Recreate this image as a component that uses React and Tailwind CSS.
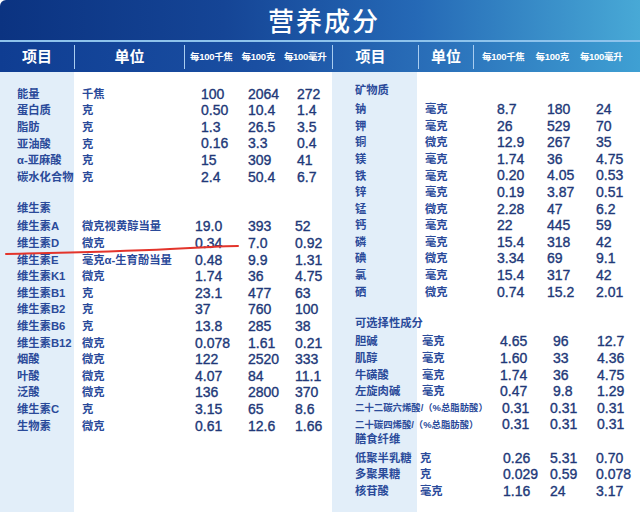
const LEFT = [
  { l: '能量', u: '千焦', v: ['100', '2064', '272'], s: 'top' },
  { l: '蛋白质', u: '克', v: ['0.50', '10.4', '1.4'], s: 'top' },
  { l: '脂肪', u: '克', v: ['1.3', '26.5', '3.5'], s: 'top' },
  { l: '亚油酸', u: '克', v: ['0.16', '3.3', '0.4'], s: 'top' },
  { l: 'α-亚麻酸', u: '克', v: ['15', '309', '41'], s: 'top' },
  { l: '碳水化合物', u: '克', v: ['2.4', '50.4', '6.7'], s: 'top' },
  { blank: true },
  { head: '维生素' },
  { l: '维生素A', u: '微克视黄醇当量', v: ['19.0', '393', '52'], s: 'vit' },
  { l: '维生素D', u: '微克', v: ['0.34', '7.0', '0.92'], s: 'vit' },
  { l: '维生素E', u: '毫克α-生育酚当量', v: ['0.48', '9.9', '1.31'], s: 'vit' },
  { l: '维生素K1', u: '微克', v: ['1.74', '36', '4.75'], s: 'vit' },
  { l: '维生素B1', u: '克', v: ['23.1', '477', '63'], s: 'vit' },
  { l: '维生素B2', u: '克', v: ['37', '760', '100'], s: 'vit' },
  { l: '维生素B6', u: '克', v: ['13.8', '285', '38'], s: 'vit' },
  { l: '维生素B12', u: '微克', v: ['0.078', '1.61', '0.21'], s: 'vit' },
  { l: '烟酸', u: '微克', v: ['122', '2520', '333'], s: 'vit' },
  { l: '叶酸', u: '微克', v: ['4.07', '84', '11.1'], s: 'vit' },
  { l: '泛酸', u: '微克', v: ['136', '2800', '370'], s: 'vit' },
  { l: '维生素C', u: '克', v: ['3.15', '65', '8.6'], s: 'vit' },
  { l: '生物素', u: '微克', v: ['0.61', '12.6', '1.66'], s: 'vit' },
]

const RIGHT = [
  { head: '矿物质' },
  { l: '钠', u: '毫克', v: ['8.7', '180', '24'], s: 'min' },
  { l: '钾', u: '毫克', v: ['26', '529', '70'], s: 'min' },
  { l: '铜', u: '微克', v: ['12.9', '267', '35'], s: 'min' },
  { l: '镁', u: '毫克', v: ['1.74', '36', '4.75'], s: 'min' },
  { l: '铁', u: '毫克', v: ['0.20', '4.05', '0.53'], s: 'min' },
  { l: '锌', u: '毫克', v: ['0.19', '3.87', '0.51'], s: 'min' },
  { l: '锰', u: '微克', v: ['2.28', '47', '6.2'], s: 'min' },
  { l: '钙', u: '毫克', v: ['22', '445', '59'], s: 'min' },
  { l: '磷', u: '毫克', v: ['15.4', '318', '42'], s: 'min' },
  { l: '碘', u: '微克', v: ['3.34', '69', '9.1'], s: 'min' },
  { l: '氯', u: '毫克', v: ['15.4', '317', '42'], s: 'min' },
  { l: '硒', u: '微克', v: ['0.74', '15.2', '2.01'], s: 'min' },
  { blank: true },
  { head: '可选择性成分' },
  { l: '胆碱', u: '毫克', v: ['4.65', '96', '12.7'], s: 'opt' },
  { l: '肌醇', u: '毫克', v: ['1.60', '33', '4.36'], s: 'opt' },
  { l: '牛磺酸', u: '毫克', v: ['1.74', '36', '4.75'], s: 'opt' },
  { l: '左旋肉碱', u: '毫克', v: ['0.47', '9.8', '1.29'], s: 'opt' },
  { wide: '二十二碳六烯酸/（%总脂肪酸）', v: ['0.31', '0.31', '0.31'], s: 'fat' },
  { wide: '二十碳四烯酸/（%总脂肪酸）', v: ['0.31', '0.31', '0.31'], s: 'fat' },
  { head: '膳食纤维' },
  { l: '低聚半乳糖', u: '克', v: ['0.26', '5.31', '0.70'], s: 'fib' },
  { l: '多聚果糖', u: '克', v: ['0.029', '0.59', '0.078'], s: 'fib' },
  { l: '核苷酸', u: '毫克', v: ['1.16', '24', '3.17'], s: 'fib' },
]

// per-section nudges: unit, num1, num2, num3
const PAD = {
  top: ['pl-[8px]', 'pl-[7px]', 'pl-[2px]', 'pl-[3px]'],
  vit: ['pl-[8px]', 'pl-[1px]', 'pl-[2px]', 'pl-[1px]'],
  min: ['pl-[8px]', 'pl-[2px]', 'pl-0', 'pl-0'],
  opt: ['pl-[5px]', 'pl-[5px]', 'pl-[6px]', 'pl-[1px]'],
  fat: ['pl-0', 'pl-[7px]', 'pl-[3px]', 'pl-[1px]'],
  fib: ['pl-[3px]', 'pl-[8px]', 'pl-[3px]', 'pl-0'],
}

const label = 'font-bold text-[11.3px] text-[#2a4a9a] whitespace-nowrap'
const num = 'text-[14px] text-[#213878] whitespace-nowrap [-webkit-text-stroke:0.35px_#213878]'

function Rows({ rows, cols, labelPad }) {
  return rows.map((r, i) => {
    if (r.blank) return <div key={i} className="h-[16.6px]" />
    if (r.head)
      return (
        <div key={i} className={`h-[16.6px] flex items-center ${labelPad} ${label}`}>
          {r.head}
        </div>
      )
    const p = PAD[r.s]
    return (
      <div key={i} className={`h-[16.6px] grid items-center ${cols}`}>
        {r.wide ? (
          <div className={`col-span-2 ${labelPad} font-bold text-[9.4px] text-[#2a4a9a] whitespace-nowrap`}>{r.wide}</div>
        ) : (
          <>
            <div className={`${labelPad} ${label}`}>{r.l}</div>
            <div className={`${p[0]} ${label}`}>{r.u}</div>
          </>
        )}
        <div className={`${p[1]} ${num}`}>{r.v[0]}</div>
        <div className={`${p[2]} ${num}`}>{r.v[1]}</div>
        <div className={`${p[3]} ${num}`}>{r.v[2]}</div>
      </div>
    )
  })
}

function Divider() {
  return <div className="w-px h-[24px] bg-[#a9cdf0]" />
}

function SmallHeads({ gaps }) {
  return (
    <div className={`flex items-center ${gaps} text-[9.5px] font-bold text-white tracking-[-0.3px] whitespace-nowrap`}>
      <span>每100千焦</span>
      <span>每100克</span>
      <span>每100毫升</span>
    </div>
  )
}

export default function App() {
  return (
    <div className="relative w-[640px] h-[512px] overflow-hidden bg-white font-[family-name:'Liberation_Sans','Noto_Sans_CJK_SC',sans-serif]">
      {/* title */}
      <div className="h-[40px] rounded-tl-[6px] bg-[linear-gradient(90deg,#0b3381_0%,#154596_35%,#2569b6_65%,#48a9d6_100%)] flex items-center justify-center">
        <h1 className="text-white text-[26px] tracking-[2px] font-['Noto_Sans_CJK_SC',sans-serif] font-medium leading-none pl-[8px]">
          营养成分
        </h1>
      </div>
      <div className="h-[2px] bg-[#8ec3ec]" />

      {/* column headers */}
      <div className="h-[30px] flex items-center bg-[linear-gradient(90deg,#0f3d92_0%,#1a4fa2_40%,#2b72bb_70%,#3fa0d3_100%)] text-white">
        <div className="w-[74px] text-center text-[15px] font-bold">项目</div>
        <Divider />
        <div className="w-[109px] text-center text-[15px] font-bold">单位</div>
        <Divider />
        <div className="w-[147px] pl-[5px]">
          <SmallHeads gaps="gap-[9px]" />
        </div>
        <Divider />
        <div className="w-[85px] text-center text-[15px] font-bold pr-[10px]">项目</div>
        <Divider />
        <div className="w-[54px] text-center text-[15px] font-bold">单位</div>
        <Divider />
        <div className="pl-[8px]">
          <SmallHeads gaps="gap-[11px]" />
        </div>
      </div>

      {/* body */}
      <div className="flex h-[440px]">
        <div className="w-[332px] pt-[11.7px] bg-[linear-gradient(90deg,#e2eef9_0_74px,#ffffff_74px)]">
          <Rows rows={LEFT} cols="grid-cols-[74px_120px_52px_48px_38px]" labelPad="pl-[17px]" />
        </div>
        <div className="w-[308px] pt-[10.5px] bg-[linear-gradient(90deg,#e2eef9_0_85px,#ffffff_85px)]">
          <Rows rows={RIGHT} cols="grid-cols-[85px_78px_52px_49px_44px]" labelPad="pl-[23px]" />
        </div>
      </div>

      {/* hand-drawn red mark */}
      <svg className="absolute left-0 top-0 pointer-events-none" width="640" height="512">
        <path
          d="M6 254 C 50 253, 110 252, 170 249 S 222 246, 238 246"
          fill="none"
          stroke="#e3342b"
          strokeWidth="2"
          strokeLinecap="round"
        />
      </svg>
    </div>
  )
}
